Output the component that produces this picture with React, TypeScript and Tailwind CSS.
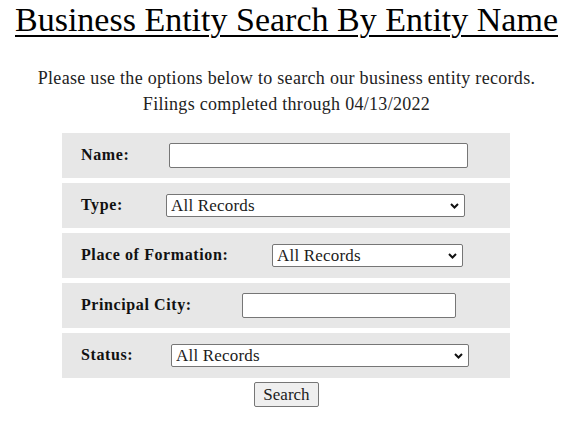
import React from "react";

const Chevron = () => (
  <svg width="9" height="6" viewBox="0 0 9 6" className="pointer-events-none absolute right-[6px] top-1/2 -translate-y-1/2">
    <path d="M1 1 L4.5 4.5 L8 1" fill="none" stroke="#111" strokeWidth="2" />
  </svg>
);

function Select({ w }: { w: string }) {
  return (
    <div className={`relative ${w} h-[23px]`}>
      <select className="w-full h-full appearance-none bg-white border border-[#767676] rounded-[2px] pl-[4px] pr-5 text-[17px] leading-[21px] tracking-[0.2px] text-[#1b1b1b] outline-none">
        <option>All Records</option>
      </select>
      <Chevron />
    </div>
  );
}

function Row({ label, labelW, children }: { label: string; labelW: string; children: React.ReactNode }) {
  return (
    <div className="flex items-center h-[45px] bg-[#e7e7e7] pl-[19px]">
      <div className={`${labelW} font-bold text-[16px] tracking-[0.6px] text-[#111] -mt-[2px]`}>{label}</div>
      {children}
    </div>
  );
}

export default function App() {
  return (
    <div className="w-[573px] h-[426px] bg-white text-[#1a1a1a]" style={{ fontFamily: '"Liberation Serif", serif' }}>
      <h1 className="text-center text-[34px] leading-[40px] text-black underline decoration-[2px] underline-offset-[4px]">
        Business Entity Search By Entity Name
      </h1>
      <div className="mt-[25px] text-center text-[18px] leading-[26px] tracking-[0.3px] text-[#222]">
        <p>Please use the options below to search our business entity records.</p>
        <p>Filings completed through 04/13/2022</p>
      </div>
      <div className="w-[448px] ml-[62px] mt-[16px] flex flex-col gap-[5px]">
        <Row label="Name:" labelW="w-[88px]">
          <input type="text" className="w-[299px] h-[25px] bg-white border border-[#767676] rounded-[2px] outline-none" />
        </Row>
        <Row label="Type:" labelW="w-[85px]">
          <Select w="w-[299px]" />
        </Row>
        <Row label="Place of Formation:" labelW="w-[191px]">
          <Select w="w-[191px]" />
        </Row>
        <Row label="Principal City:" labelW="w-[161px]">
          <input type="text" className="w-[214px] h-[25px] bg-white border border-[#767676] rounded-[2px] outline-none" />
        </Row>
        <Row label="Status:" labelW="w-[90px]">
          <Select w="w-[298px]" />
        </Row>
      </div>
      <div className="flex justify-center mt-[4px]">
        <button className="w-[65px] h-[25px] bg-[#efefef] border border-[#767676] rounded-[2px] text-[17px] leading-[21px] text-[#1b1b1b]">
          Search
        </button>
      </div>
    </div>
  );
}
